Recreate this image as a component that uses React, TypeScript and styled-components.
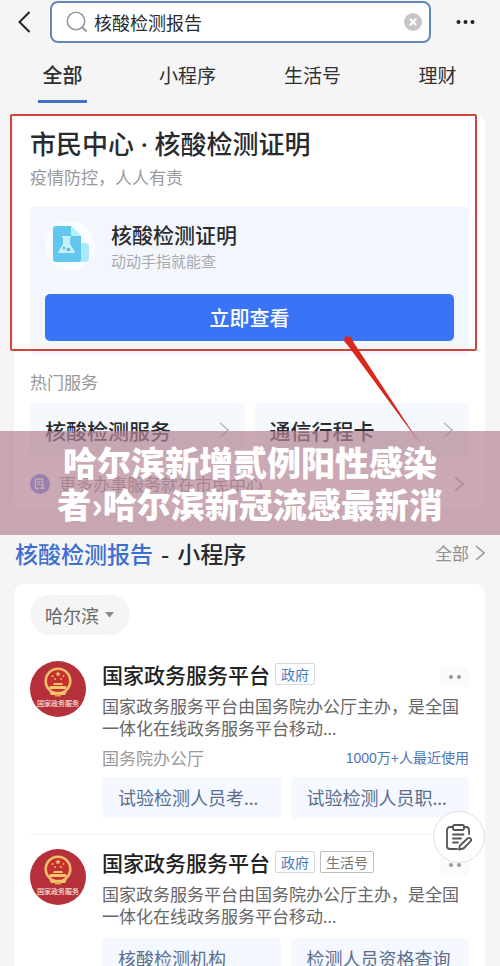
import React, { useState } from "react";
import styled, { createGlobalStyle } from "styled-components";

const GlobalStyle = createGlobalStyle`
  * { box-sizing: border-box; }
  body {
    margin: 0;
    background: #f5f5f5;
    font-family: "Noto Sans CJK SC", "Noto Sans", sans-serif;
    color: #2a2b2e;
  }
  button, input { font: inherit; color: inherit; }
  button { padding: 0; border: 0; background: none; cursor: pointer; }
  h1, h2, h3, p { margin: 0; font-size: inherit; font-weight: inherit; }
  a { color: inherit; text-decoration: none; }
  svg { display: block; flex: none; }
`;

const Page = styled.main`
  position: relative;
  height: 100vh;
  overflow-x: hidden;
  overflow-y: auto;
  scrollbar-width: none;
  background: #f5f5f5;
`;

const TopBar = styled.header`
  display: flex;
  align-items: center;
  gap: 20px;
  padding: 1px 25px 0 18px;
`;

const SearchBox = styled.label`
  flex: 1;
  min-width: 0;
  height: 42px;
  display: flex;
  align-items: center;
  gap: 6px;
  padding: 0 7px 0 14px;
  border: 2px solid #6288bb;
  border-radius: 8px;
  background: #fff;
`;

const SearchInput = styled.input`
  flex: 1;
  min-width: 0;
  padding: 0;
  border: 0;
  outline: 0;
  background: none;
  font-size: 18px;
  line-height: 26px;
`;

const Tabs = styled.nav`
  display: grid;
  grid-template-columns: repeat(4, 1fr);
  margin-top: 16px;
`;

const Tab = styled.button<{ $active: boolean }>`
  display: flex;
  flex-direction: column;
  align-items: center;
  gap: 9px;
  font-size: ${(p) => (p.$active ? 20 : 19)}px;
  font-weight: ${(p) => (p.$active ? 500 : 400)};
  line-height: 32px;
  color: #2f3033;
  &::after {
    content: "";
    width: 49px;
    height: 3px;
    background: ${(p) => (p.$active ? "#4470c8" : "transparent")};
  }
`;

const Card = styled.section<{ $gap: number }>`
  position: relative;
  margin: ${(p) => p.$gap}px 15px 0 14px;
  padding: 12px 16px 14px;
  border-radius: 10px;
  background: #fff;
`;

const CardTitle = styled.h1`
  margin-bottom: 5px;
  font-size: 26px;
  font-weight: 500;
  line-height: 34px;
`;

const Latin = styled.span`
  font-family: "Noto Sans", sans-serif;
  line-height: 1;
`;

const Caption = styled.p`
  font-size: 17px;
  line-height: 24px;
  color: #999;
`;

const Proof = styled.div`
  margin: 17px 0 15px;
  padding: 15px 15px 14px;
  border-radius: 6px;
  background: #f3f7fd;
`;

const ProofHead = styled.div`
  display: flex;
  align-items: center;
  gap: 16px;
  height: 50px;
  margin-bottom: 23px;
`;

const ProofName = styled.h2`
  font-size: 21px;
  font-weight: 500;
  line-height: 28px;
`;

const ProofNote = styled.p`
  margin-top: 2px;
  font-size: 15px;
  line-height: 22px;
  color: #a7abb1;
`;

const PrimaryButton = styled.button`
  width: 100%;
  height: 47px;
  border-radius: 5px;
  background: #3974f6;
  color: #fff;
  font-size: 20px;
  font-weight: 500;
`;

const Services = styled.div`
  display: grid;
  grid-template-columns: 1fr 1fr;
  gap: 10px;
  margin: 9px 0 16px;
`;

const Service = styled.a`
  display: flex;
  align-items: center;
  justify-content: space-between;
  height: 53px;
  padding: 0 16px 0 15px;
  border-radius: 4px;
  background: #f5f9fe;
  font-size: 21px;
  font-weight: 500;
`;

const MoreLink = styled.a`
  display: flex;
  align-items: center;
  gap: 9px;
  padding-right: 5px;
  font-size: 17px;
  line-height: 24px;
  color: #888;
  span { flex: 1; }
`;

const HighlightFrame = styled.div`
  position: absolute;
  top: 0;
  left: -4px;
  right: 8px;
  height: 237px;
  border: 2px solid #d3443c;
  border-radius: 2px;
  pointer-events: none;
`;

const Pointer = styled.svg`
  position: absolute;
  top: 220px;
  left: 328px;
  pointer-events: none;
`;

const Banner = styled.div`
  position: absolute;
  top: 431px;
  left: 0;
  right: 0;
  padding: 10px 0;
  background: rgba(180, 131, 148, 0.7);
  color: #fff;
  font-size: 34px;
  font-weight: 900;
  line-height: 42px;
  text-align: center;
  white-space: nowrap;
`;

const BannerLine = styled.div``;

const SectionHead = styled.div`
  display: flex;
  align-items: center;
  justify-content: space-between;
  margin-top: 26px;
  padding: 0 15px;
  line-height: 34px;
`;

const SectionTitle = styled.h2`
  display: flex;
  gap: 8px;
  font-size: 23px;
  font-weight: 500;
  em { font-style: normal; color: #3d6fd0; }
`;

const AllLink = styled.a`
  display: flex;
  align-items: center;
  gap: 6px;
  font-size: 17px;
  color: #909090;
`;

const CityButton = styled.button`
  display: flex;
  align-items: center;
  gap: 6px;
  height: 40px;
  padding: 0 16px 0 15px;
  border-radius: 20px;
  background: #f5f5f5;
  color: #666;
  font-size: 18px;
`;

const Entry = styled.article`
  display: flex;
  gap: 16px;
`;

const Divider = styled.hr`
  height: 1px;
  margin: 16px 0 14px;
  border: 0;
  background: #f3f3f3;
`;

const EntryBody = styled.div`
  flex: 1;
  min-width: 0;
`;

const EntryHead = styled.div`
  display: flex;
  align-items: center;
  gap: 5px;
  height: 26px;
`;

const EntryTitle = styled.h3`
  font-size: 21px;
  font-weight: 500;
  line-height: 26px;
  color: #222;
`;

const Tag = styled.span<{ $blue?: boolean }>`
  height: 22px;
  padding: 0 5px;
  border: 1px solid ${(p) => (p.$blue ? "#cfdbe6" : "#bdbdbd")};
  border-radius: 2px;
  font-size: 14px;
  line-height: 20px;
  color: ${(p) => (p.$blue ? "#4b7bbd" : "#777")};
`;

const Dots = styled.button`
  display: flex;
  align-items: center;
  align-self: flex-end;
  justify-content: center;
  gap: 4px;
  width: 29px;
  height: 20px;
  margin-left: auto;
  border-radius: 3px;
  background: #fafafa;
  i { width: 4px; height: 4px; border-radius: 2px; background: #999; }
`;

const Description = styled.p`
  margin: 8px 0 11px;
  padding-right: 8px;
  font-size: 17px;
  line-height: 22px;
  color: #666;
`;

const Meta = styled.div`
  display: flex;
  align-items: center;
  justify-content: space-between;
  height: 14px;
  margin-bottom: 13px;
  font-size: 17px;
  color: #999;
`;

const Usage = styled.span`
  font-family: "Liberation Sans", "Noto Sans CJK SC", sans-serif;
  font-size: 14px;
  color: #4b76b8;
`;

const Shortcuts = styled.div`
  display: grid;
  grid-template-columns: 1fr 1fr;
  gap: 10px;
`;

const Shortcut = styled.a`
  height: 41px;
  padding-left: 16px;
  border-radius: 4px;
  background: #f5f8fe;
  color: #5a6e8e;
  font-size: 18px;
  line-height: 40px;
  white-space: nowrap;
  overflow: hidden;
`;

const ListCard = styled(Card)`
  padding-top: 11px;
  ${CityButton} { margin-bottom: 26px; }
`;

const FeedbackButton = styled.button`
  position: fixed;
  right: 15px;
  bottom: 103px;
  width: 52px;
  height: 52px;
  display: flex;
  align-items: center;
  justify-content: center;
  border: 1px solid #dedede;
  border-radius: 50%;
  background: #fff;
`;

const Chevron = ({ color = "#b5b8bd" }: { color?: string }) => (
  <svg width="10" height="16" viewBox="0 0 10 16" fill="none" stroke={color} strokeWidth="1.6">
    <path d="M1 1l8 7-8 7" />
  </svg>
);

const ReportIcon = () => (
  <svg width="50" height="50" viewBox="0 0 50 50">
    <circle cx="25" cy="25" r="25" fill="#fafdff" />
    <rect x="26" y="22" width="18" height="19" rx="4" fill="#a9e9f8" />
    <path d="M11 5h15l10 10v23a3 3 0 0 1-3 3H11a3 3 0 0 1-3-3V8a3 3 0 0 1 3-3z" fill="#61c7ee" />
    <path d="M26 5l10 10h-8a2 2 0 0 1-2-2z" fill="#bdeefb" />
    <path d="M17 15h9v2h-1v6l5 8a1 1 0 0 1-1 1H14a1 1 0 0 1-1-1l5-8v-6h-1z" fill="#c5f0fb" />
    <circle cx="19" cy="27" r="1.3" fill="#50b7df" />
    <circle cx="23.5" cy="28.5" r="1.7" fill="#50b7df" />
  </svg>
);

const Emblem = () => (
  <svg width="56" height="56" viewBox="0 0 56 56" role="img" aria-label="国家政务服务">
    <circle cx="28" cy="28" r="28" fill="#b5303a" />
    <circle cx="28" cy="20" r="12.3" fill="#c5302f" stroke="#efbd6d" strokeWidth="2.6" />
    <path d="M28 10l.8 1.9 2 .1-1.6 1.3.6 2L28 14.200l-1.8 1.1.6-2-1.6-1.3 2-.1z" fill="#f3c66c" />
    <g fill="#f3c66c">
      <circle cx="22.5" cy="15" r=".9" />
      <circle cx="33.5" cy="15" r=".9" />
      <circle cx="25" cy="18" r=".9" />
      <circle cx="31" cy="18" r=".9" />
      <path d="M24 22h8l1 2h-10zM20 25h16l1 3H19z" />
      <path d="M19 30l4 2h3l2-1.500 2 1.500h3l4-2-2 4h-4l-1.500-1h-3l-1.500 1h-4z" />
    </g>
    <path d="M25 34l3-1.500 3 1.500v1.500h-6z" fill="#e6a657" />
    <text x="28" y="45" textAnchor="middle" fontSize="7" fontWeight="500" fill="#fbe3cf">
      国家政务服务
    </text>
  </svg>
);

type EntryData = {
  tags: { text: string; blue?: boolean }[];
  org?: string;
  usage?: string;
  links: { text: string; cut?: boolean }[];
};

const entries: EntryData[] = [
  {
    tags: [{ text: "政府", blue: true }],
    org: "国务院办公厅",
    usage: "1000万+人最近使用",
    links: [
      { text: "试验检测人员考", cut: true },
      { text: "试验检测人员职", cut: true },
    ],
  },
  {
    tags: [{ text: "政府", blue: true }, { text: "生活号" }],
    links: [{ text: "核酸检测机构" }, { text: "检测人员资格查询" }],
  },
];

const tabs = ["全部", "小程序", "生活号", "理财"];

export default function App() {
  const [query, setQuery] = useState("核酸检测报告");
  const [tab, setTab] = useState("全部");

  return (
    <Page>
      <GlobalStyle />
      <TopBar>
        <button aria-label="返回">
          <svg width="12" height="22" viewBox="0 0 12 22" fill="none" stroke="#222" strokeWidth="2">
            <path d="M11.500 1L1.500 11l10 10" />
          </svg>
        </button>
        <SearchBox>
          <svg width="22" height="22" viewBox="0 0 22 22" fill="none" stroke="#999" strokeWidth="1.6">
            <circle cx="10" cy="10" r="8.7" />
            <path d="M16 16l4.500 4.500" strokeWidth="2" />
          </svg>
          <SearchInput aria-label="搜索" value={query} onChange={(e) => setQuery(e.target.value)} />
          <button aria-label="清除" onClick={() => setQuery("")}>
            <svg width="18" height="18" viewBox="0 0 18 18">
              <circle cx="9" cy="9" r="9" fill="#c6c6c6" />
              <path d="M5.800 5.800l6.400 6.400M12.200 5.800l-6.400 6.400" stroke="#fff" strokeWidth="2" />
            </svg>
          </button>
        </SearchBox>
        <button aria-label="更多">
          <svg width="24" height="6" viewBox="0 0 24 6" fill="#222">
            <circle cx="7.5" cy="3" r="2" />
            <circle cx="14.5" cy="3" r="2" />
            <circle cx="21.5" cy="3" r="2" />
          </svg>
        </button>
      </TopBar>

      <Tabs>
        {tabs.map((name) => (
          <Tab key={name} $active={name === tab} onClick={() => setTab(name)}>
            {name}
          </Tab>
        ))}
      </Tabs>

      <Card $gap={11}>
        <CardTitle>市民中心<Latin> · </Latin>核酸检测证明</CardTitle>
        <Caption>疫情防控，人人有责</Caption>
        <Proof>
          <ProofHead>
            <ReportIcon />
            <div>
              <ProofName>核酸检测证明</ProofName>
              <ProofNote>动动手指就能查</ProofNote>
            </div>
          </ProofHead>
          <PrimaryButton>立即查看</PrimaryButton>
        </Proof>
        <Caption>热门服务</Caption>
        <Services>
          <Service href="#test">核酸检测服务<Chevron /></Service>
          <Service href="#travel">通信行程卡<Chevron /></Service>
        </Services>
        <MoreLink href="#more">
          <svg width="20" height="20" viewBox="0 0 20 20">
            <circle cx="10" cy="10" r="10" fill="#5b78ee" />
            <path d="M5.500 5h7v4M5.500 5v9.500H9M7.500 8h3M7.500 10.500h2" fill="none" stroke="#fff" strokeWidth="1.3" />
            <circle cx="12.5" cy="11" r="1.5" fill="#fff" />
            <path d="M10 15c0-3 5-3 5 0z" fill="#fff" />
          </svg>
          <span>更多办事服务就在市民中心</span>
          <Chevron color="#999" />
        </MoreLink>
        <HighlightFrame />
        <Pointer width="84" height="112" viewBox="0 0 84 112" fill="#d9291f">
          <path d="M3 2l6 1 3 6 67 102L7 13 2 7z" />
        </Pointer>
      </Card>

      <SectionHead>
        <SectionTitle>
          <em>核酸检测报告</em>
          <span>-</span>
          <span>小程序</span>
        </SectionTitle>
        <AllLink href="#all">全部<Chevron color="#999" /></AllLink>
      </SectionHead>

      <ListCard $gap={14}>
        <CityButton>
          哈尔滨
          <svg width="9" height="6" viewBox="0 0 9 6" fill="#888"><path d="M0 0h9L4.500 5.500z" /></svg>
        </CityButton>
        {entries.map((entry, i) => (
          <React.Fragment key={i}>
            {i > 0 && <Divider />}
            <Entry>
              <Emblem />
              <EntryBody>
                <EntryHead>
                  <EntryTitle>国家政务服务平台</EntryTitle>
                  {entry.tags.map((t) => (
                    <Tag key={t.text} $blue={t.blue}>{t.text}</Tag>
                  ))}
                  <Dots aria-label="更多选项"><i /><i /></Dots>
                </EntryHead>
                <Description>
                  国家政务服务平台由国务院办公厅主办，是全国一体化在线政务服务平台移动<Latin>…</Latin>
                </Description>
                {entry.org && (
                  <Meta>
                    <span>{entry.org}</span>
                    <Usage>{entry.usage}</Usage>
                  </Meta>
                )}
                <Shortcuts>
                  {entry.links.map((l) => (
                    <Shortcut key={l.text} href="#open">
                      {l.text}
                      {l.cut && <Latin>…</Latin>}
                    </Shortcut>
                  ))}
                </Shortcuts>
              </EntryBody>
            </Entry>
          </React.Fragment>
        ))}
      </ListCard>

      <Banner>
        <BannerLine>哈尔滨新增贰例阳性感染</BannerLine>
        <BannerLine>者›哈尔滨新冠流感最新消</BannerLine>
      </Banner>

      <FeedbackButton aria-label="反馈">
        <svg width="28" height="28" viewBox="0 0 28 28" fill="none" stroke="#555" strokeWidth="1.8" strokeLinecap="round" strokeLinejoin="round">
          <path d="M8 4H5a3 3 0 0 0-3 3v16a3 3 0 0 0 3 3h7M19 4h2a3 3 0 0 1 3 3v4" />
          <rect x="8" y="2" width="11" height="5" rx="1.5" />
          <path d="M8 11.500h10.500M8 15.500h8M8 19.500h5" />
          <path d="M15 22.500l7.500-7a2 2 0 0 1 3 0 2 2 0 0 1 0 2.800l-7 7.200-4.500 1z" />
        </svg>
      </FeedbackButton>
    </Page>
  );
}
